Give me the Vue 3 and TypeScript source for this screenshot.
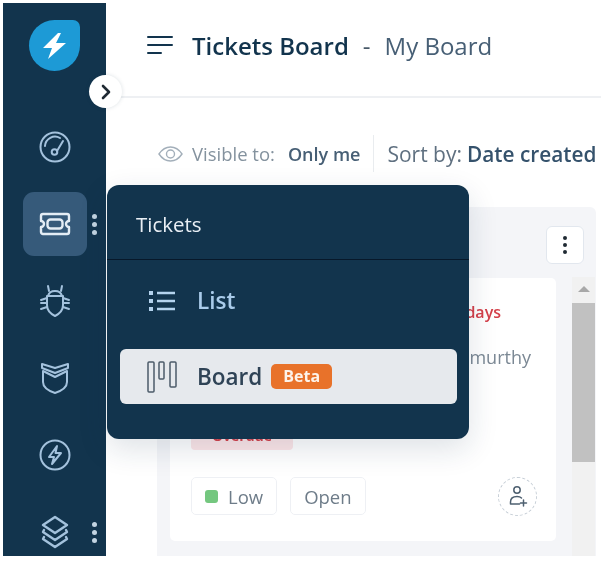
<script setup lang="ts">
const navIcons = ['gauge', 'ticket', 'bug', 'shield', 'bolt', 'layers']
</script>

<template>
  <div class="page">
    <aside class="sidebar">
      <div class="logo-wrap">
        <div class="logo">
          <svg width="30" height="30" viewBox="0 0 30 30">
            <path d="M18 2 3 17h9l-4 11 18-16h-10l5-10z" fill="#fff" />
          </svg>
        </div>
      </div>
      <div v-for="name in navIcons" :key="name" class="nav-item">
        <div class="nav-btn" :class="{ active: name === 'ticket' }">
          <svg class="nav-icon" width="36" height="36" viewBox="0 0 36 36" fill="none" stroke="#a4c2dd" stroke-width="2" stroke-linejoin="round" stroke-linecap="round">
            <template v-if="name === 'gauge'">
              <circle cx="18" cy="18" r="14.500" />
              <path d="M8 17a10 10 0 0 1 15-8" />
              <path d="M26 12l-6 10" />
              <circle cx="17.500" cy="23" r="2.800" />
            </template>
            <template v-else-if="name === 'ticket'">
              <path d="M6 8h24a2 2 0 0 1 2 2v5a3 3 0 0 0 0 6v5a2 2 0 0 1-2 2H6a2 2 0 0 1-2-2v-5a3 3 0 0 0 0-6v-5a2 2 0 0 1 2-2z" stroke="#e4edf5" stroke-width="2.400" />
              <rect x="10.500" y="13.500" width="15" height="9" rx="3" stroke="#e4edf5" stroke-width="2.400" />
            </template>
            <template v-else-if="name === 'bug'">
              <path d="M10 13h16v9c0 5-4 9-8 11-4-2-8-6-8-11z" />
              <path d="M11 13c1-4 4-5 7-5s6 1 7 5" />
              <path d="M12 8 11 3M24 8l1-5M10 15l-6 2M10 20H4M10 24l-6 2M26 15l6 2M26 20h6M26 24l6 2" />
            </template>
            <template v-else-if="name === 'shield'">
              <path d="M6 11v11c0 5 6 9 12 11 6-2 12-6 12-11V11l-12 6z" />
              <path d="M5 4l13 4 13-4v4l-13 5L5 8z" />
            </template>
            <template v-else-if="name === 'bolt'">
              <circle cx="18" cy="18" r="14.500" />
              <path d="M20 9l-8 11h5l-2 7 9-11h-5.500z" />
            </template>
            <template v-else>
              <path d="M18 3 30 11 18 19 6 11z" stroke-width="2.400" />
              <path d="M7 16l-1 2 12 8 12-8-1-2" stroke-width="2.400" />
              <path d="M7 23l-1 2 12 8 12-8-1-2" stroke-width="2.400" />
            </template>
          </svg>
        </div>
        <span v-if="name === 'ticket' || name === 'layers'" class="dots">
          <i></i><i></i><i></i>
        </span>
      </div>
    </aside>

    <main class="main">
      <header class="header">
        <svg class="menu" width="26" height="20" viewBox="0 0 26 20" fill="none" stroke="#12344d" stroke-width="2" stroke-linecap="round">
          <path d="M1 2h24M1 10h24M1 18h13" />
        </svg>
        <h1 class="title">Tickets Board</h1>
        <span class="sep">-</span>
        <span class="board-name">My Board</span>
      </header>

      <div class="toolbar">
        <svg class="eye" width="25" height="16" viewBox="0 0 25 16" fill="none" stroke="#a3afba" stroke-width="1.400">
          <path d="M1 8c3-4.500 7-7 11.500-7S21 3.500 24 8c-3 4.500-7 7-11.500 7S4 12.500 1 8z" />
          <circle cx="12.500" cy="8" r="4" />
        </svg>
        <span class="visible-label">Visible to:</span>
        <span class="visible-value">Only me</span>
        <span class="divider"></span>
        <span class="sort-label">Sort by:</span>
        <span class="sort-value">Date created</span>
      </div>

      <section class="column">
        <div class="column-head">
          <button class="kebab"><i></i><i></i><i></i></button>
        </div>
        <div class="column-body">
          <div class="cards">
            <article class="card">
              <div class="due">Overdue by 2 days</div>
              <div class="agent">Assigned to Krishnamurthy</div>
              <span class="tag">Overdue</span>
              <div class="card-foot">
                <span class="chip"><b class="low-dot"></b>Low</span>
                <span class="chip">Open</span>
                <span class="assign">
                  <svg width="20" height="22" viewBox="0 0 20 22" fill="none" stroke="#4e6070" stroke-width="1.500" stroke-linecap="round">
                    <circle cx="9" cy="5" r="3.200" />
                    <path d="M2.500 19v-2c0-3.500 2.500-5.500 6.500-5.500 2 0 3.500.5 4.500 1.500M2.500 19h9M15.500 15v6M12.500 18h6" />
                  </svg>
                </span>
              </div>
            </article>
            <article class="card"></article>
          </div>
          <div class="scrollbar">
            <span class="arrow"></span>
            <span class="thumb"></span>
          </div>
        </div>
      </section>
    </main>

    <button class="toggle">
      <svg width="12" height="16" viewBox="0 0 12 16" fill="none" stroke="#1f2a33" stroke-width="2.600" stroke-linecap="round" stroke-linejoin="round">
        <path d="M3 2l6 6-6 6" />
      </svg>
    </button>

    <div class="popover">
      <div class="pop-title">Tickets</div>
      <div class="pop-list">
        <div class="pop-row">
          <svg class="pop-icon" width="28" height="22" viewBox="0 0 28 22" fill="none" stroke="#b4d3ee" stroke-width="2.400">
            <path d="M9 3h18M9 11h18M9 19h18" />
            <path d="M1 3h4M1 11h4M1 19h4" stroke-width="3.800" />
          </svg>
          <span class="pop-text">List</span>
        </div>
        <div class="pop-row selected">
          <svg class="pop-icon" width="30" height="32" viewBox="0 0 30 32" fill="none" stroke="#4c5b69" stroke-width="1.500">
            <rect x="1" y="1" width="6" height="30" rx="1" />
            <rect x="12" y="1" width="5" height="17" rx="1" />
            <rect x="23" y="1" width="6" height="25" rx="1" />
          </svg>
          <span class="pop-text">Board</span>
          <span class="beta">Beta</span>
        </div>
      </div>
    </div>
  </div>
</template>

<style scoped>
.page {
  position: relative;
  display: flex;
  width: 601px;
  height: 562px;
  overflow: hidden;
  background: #fff;
  font-family: "Open Sans", "Noto Sans", sans-serif;
  color: #12344d;
  filter: blur(0.6px);
}

.sidebar {
  flex: none;
  width: 103px;
  height: 553px;
  margin: 3px 0 0 3px;
  background: #12344d;
  overflow: hidden;
}

.logo-wrap {
  height: 112px;
  padding: 17px 0 0 26px;
  box-sizing: border-box;
}

.logo {
  display: flex;
  align-items: center;
  justify-content: center;
  width: 51px;
  height: 51px;
  background: #1d9ad6;
  border-radius: 50% 7px 50% 50%;
}

.nav-item {
  position: relative;
  height: 64px;
  margin-bottom: 13px;
  padding-left: 20px;
}

.nav-btn {
  display: flex;
  align-items: center;
  justify-content: center;
  width: 64px;
  height: 64px;
  border-radius: 11px;
}

.nav-btn.active {
  background: #365a7a;
}

.dots {
  position: absolute;
  left: 89px;
  top: 22px;
  display: flex;
  flex-direction: column;
  gap: 3px;
}

.dots i {
  width: 5px;
  height: 5px;
  border-radius: 50%;
  background: #c3d4e2;
}

.main {
  flex: 1;
  min-width: 0;
  display: flex;
  flex-direction: column;
}

.header {
  flex: none;
  display: flex;
  align-items: center;
  height: 98px;
  padding: 0 0 6px 41px;
  box-sizing: border-box;
  border-bottom: 2px solid #eef0f3;
}

.menu {
  margin-right: 19px;
}

.title {
  margin: 0;
  font-size: 24px;
  font-weight: 600;
  color: #12344d;
}

.sep {
  margin: 0 14px 0 14px;
  font-size: 24px;
  color: #475867;
}

.board-name {
  font-size: 24px;
  color: #475f75;
}

.toolbar {
  flex: none;
  display: flex;
  align-items: center;
  height: 37px;
  margin: 37px 0 35px;
  padding-left: 52px;
  white-space: nowrap;
}

.visible-label {
  margin-left: 9px;
  font-size: 18.500px;
  color: #84929e;
}

.visible-value {
  margin-left: 13px;
  font-size: 18px;
  font-weight: 600;
  color: #475f75;
}

.divider {
  width: 1px;
  height: 37px;
  margin: 0 13px;
  background: #e9ecef;
}

.sort-label {
  font-size: 21px;
  color: #5f7080;
}

.sort-value {
  margin-left: 5px;
  font-size: 20.800px;
  font-weight: 600;
  color: #35526c;
}

.column {
  flex: none;
  display: flex;
  flex-direction: column;
  width: 439px;
  height: 349px;
  margin-left: 51px;
  background: #f4f5f8;
  border-radius: 6px 6px 0 0;
  overflow: hidden;
}

.column-head {
  flex: none;
  display: flex;
  justify-content: flex-end;
  height: 71px;
  padding: 19px 12px 0 0;
  box-sizing: border-box;
}

.kebab {
  display: flex;
  flex-direction: column;
  align-items: center;
  justify-content: center;
  gap: 3px;
  width: 38px;
  height: 38px;
  padding: 0;
  background: #fff;
  border: 1px solid #e2e7ee;
  border-radius: 6px;
}

.kebab i {
  width: 4px;
  height: 4px;
  border-radius: 50%;
  background: #1f2a33;
}

.column-body {
  flex: 1;
  display: flex;
  min-height: 0;
}

.cards {
  width: 399px;
  padding-left: 13px;
  box-sizing: border-box;
}

.card {
  height: 263px;
  margin-bottom: 15px;
  padding: 22px 20px 26px 21px;
  box-sizing: border-box;
  background: #fff;
  border-radius: 5px;
}

.due {
  margin-right: 35px;
  font-size: 16px;
  font-weight: 600;
  line-height: 24px;
  text-align: right;
  color: #d4404a;
}

.agent {
  margin-top: 19px;
  margin-right: 5px;
  font-size: 18px;
  line-height: 28px;
  text-align: right;
  color: #7b8894;
  white-space: nowrap;
}

.tag {
  display: inline-block;
  margin-top: 54px;
  width: 102px;
  height: 25px;
  font-size: 14px;
  font-weight: 700;
  line-height: 21px;
  text-align: center;
  color: #d4404a;
  background: #fde6e8;
  border-radius: 4px;
}

.card-foot {
  display: flex;
  align-items: center;
  gap: 13px;
  height: 38px;
  margin-top: 27px;
}

.chip {
  display: flex;
  align-items: center;
  height: 38px;
  padding: 0 13px;
  box-sizing: border-box;
  font-size: 18.500px;
  font-weight: 500;
  color: #6e7c89;
  background: #fff;
  border: 1px solid #eef0f4;
  border-radius: 5px;
}

.low-dot {
  width: 13px;
  height: 13px;
  margin-right: 10px;
  border-radius: 3px;
  background: #74c77f;
}

.assign {
  display: flex;
  align-items: center;
  justify-content: center;
  width: 39px;
  height: 39px;
  margin-left: auto;
  margin-right: -1px;
  box-sizing: border-box;
  border: 1px dashed #c6ced6;
  border-radius: 50%;
}

.scrollbar {
  flex: none;
  display: flex;
  flex-direction: column;
  align-items: center;
  width: 23px;
  margin-left: 16px;
  margin-top: -1px;
  background: #f1f1f1;
}

.arrow {
  flex: none;
  width: 0;
  height: 0;
  margin-top: 9px;
  border-left: 6px solid transparent;
  border-right: 6px solid transparent;
  border-bottom: 6px solid #a8a8a8;
}

.thumb {
  flex: none;
  width: 100%;
  height: 159px;
  margin-top: 11px;
  background: #c1c1c1;
}

.toggle {
  position: absolute;
  left: 89px;
  top: 75px;
  display: flex;
  align-items: center;
  justify-content: center;
  width: 33px;
  height: 33px;
  padding: 0;
  background: #fff;
  border: none;
  border-radius: 50%;
  box-shadow: 0 0 4px rgba(18, 52, 77, 0.15);
}

.popover {
  position: absolute;
  left: 107px;
  top: 185px;
  width: 362px;
  height: 254px;
  background: #12344d;
  border-radius: 12px;
  box-shadow: 0 10px 30px rgba(18, 52, 77, 0.14);
}

.pop-title {
  height: 75px;
  padding-left: 29px;
  box-sizing: border-box;
  font-size: 20.500px;
  font-weight: 500;
  line-height: 78px;
  color: #e9eff5;
  border-bottom: 1px solid #07182a;
}

.pop-list {
  display: flex;
  flex-direction: column;
  padding: 13px 12px 0 13px;
}

.pop-row {
  display: flex;
  align-items: center;
  height: 55px;
  margin-bottom: 21px;
  padding-left: 28px;
  font-size: 22.500px;
  color: #a9cbea;
}

.pop-row .pop-icon {
  flex: none;
  margin-right: 21px;
}

.pop-row.selected {
  margin-bottom: 0;
  padding-left: 27px;
  color: #2f4356;
  background: #e6e9ed;
  border-radius: 6px;
}

.pop-row.selected .pop-icon {
  margin-right: 20px;
}

.pop-text {
  font-weight: 600;
}

.beta {
  margin-left: 9px;
  padding: 0 12px;
  font-size: 16px;
  font-weight: 700;
  line-height: 25px;
  color: #fdf3ea;
  background: #e8722a;
  border-radius: 5px;
}
</style>
